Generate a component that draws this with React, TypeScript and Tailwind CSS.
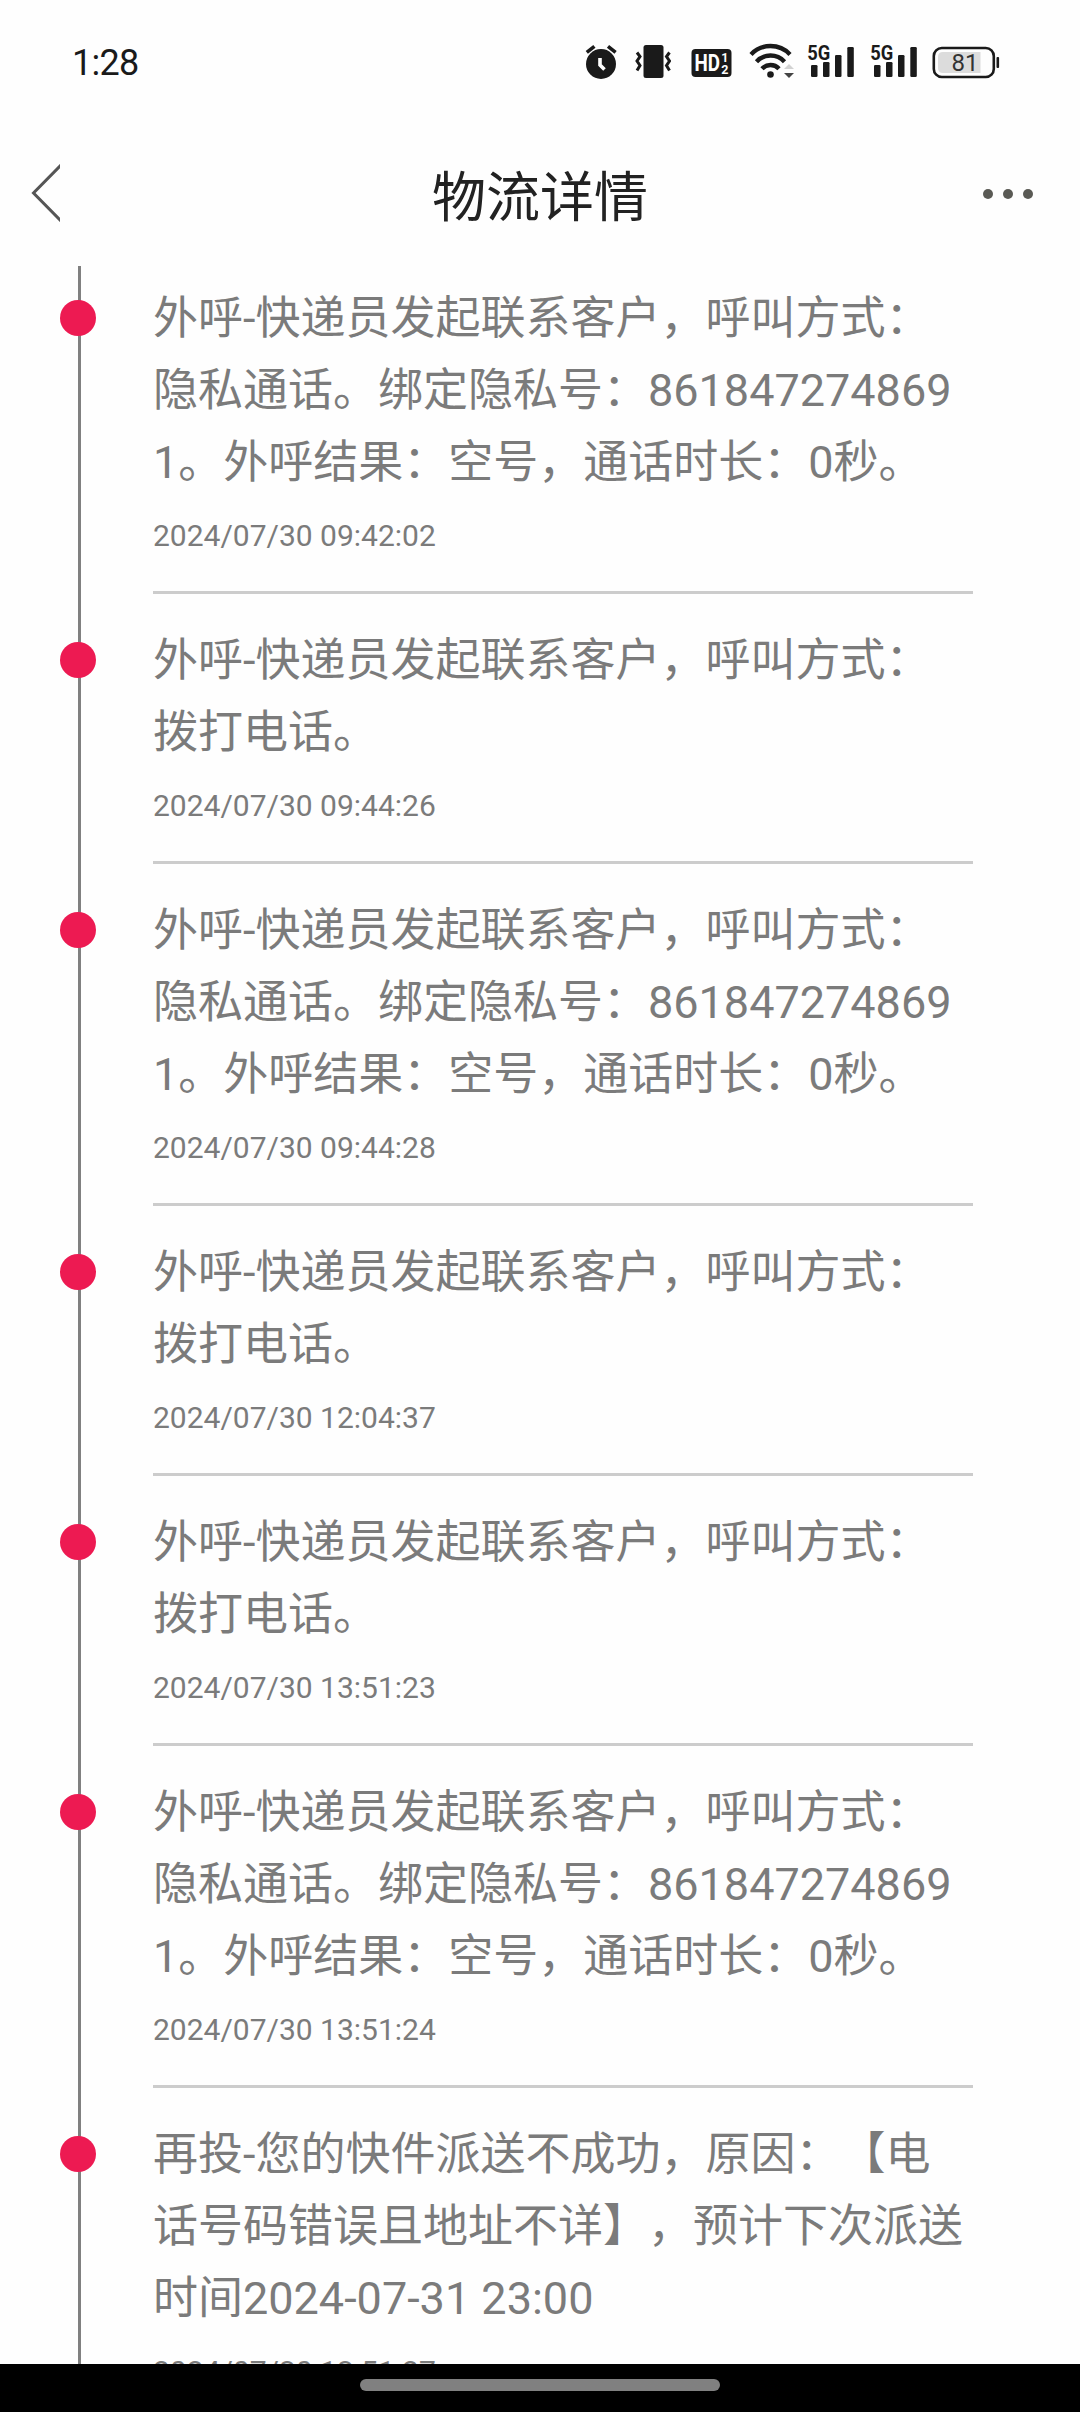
interface TrackItem {
  text: string;
  time: string;
}

const privateCall =
  "外呼-快递员发起联系客户，呼叫方式：隐私通话。绑定隐私号：8618472748691。外呼结果：空号，通话时长：0秒。";
const dialCall = "外呼-快递员发起联系客户，呼叫方式：拨打电话。";

const tracks: TrackItem[] = [
  { text: privateCall, time: "2024/07/30 09:42:02" },
  { text: dialCall, time: "2024/07/30 09:44:26" },
  { text: privateCall, time: "2024/07/30 09:44:28" },
  { text: dialCall, time: "2024/07/30 12:04:37" },
  { text: dialCall, time: "2024/07/30 13:51:23" },
  { text: privateCall, time: "2024/07/30 13:51:24" },
  {
    text: "再投-您的快件派送不成功，原因：【电话号码错误且地址不详】，预计下次派送时间2024-07-31 23:00",
    time: "2024/07/30 13:51:27",
  },
];

function AlarmIcon() {
  return (
    <svg className="w-[34px] h-[40px]" viewBox="0 0 34 40" fill="none">
      <circle cx="16" cy="22" r="15" fill="#1a1a1a" />
      <path d="M1.8 10.4L9.4 4.4M30.6 10.4L23 4.4" stroke="#1a1a1a" strokeWidth="3.6" />
      <path d="M15 16V23L19.5 27.5" stroke="#fff" strokeWidth="3.6" />
    </svg>
  );
}

function VibrateIcon() {
  return (
    <svg className="w-[36px] h-[40px]" viewBox="0 0 36 40" fill="none">
      <rect x="8.5" y="3" width="20" height="33" rx="2.5" fill="#1a1a1a" />
      <path
        d="M2 10.5L5 14.5L2 19L5 23.5L2 28.5M34.5 10.5L31.5 14.5L34.5 19L31.5 23.5L34.5 28.5"
        stroke="#1a1a1a"
        strokeWidth="3"
      />
    </svg>
  );
}

function HdIcon() {
  return (
    <svg className="w-[41px] h-[40px]" viewBox="0 0 41 40">
      <rect x="0.5" y="7" width="40" height="28" rx="4" fill="#1a1a1a" />
      <g fill="#fff" fontFamily="Roboto, sans-serif" fontWeight="700">
        <text x="3.5" y="28.8" fontSize="23" textLength="25.5" lengthAdjust="spacingAndGlyphs">
          HD
        </text>
        <text x="30.3" y="19.5" fontSize="12.5">
          1
        </text>
        <text x="30.3" y="32" fontSize="12.5">
          2
        </text>
      </g>
    </svg>
  );
}

function WifiIcon() {
  return (
    <svg className="w-[46px] h-[40px]" viewBox="0 0 46 40" fill="none">
      <g stroke="#1a1a1a" strokeWidth="4.4">
        <path d="M2 12.4A27 27 0 0 1 41 12.4" />
        <path d="M7.5 19.7A19 19 0 0 1 35.5 19.7" />
        <path d="M13 26.8A11.5 11.5 0 0 1 30 26.8" />
      </g>
      <circle cx="21.5" cy="32.5" r="3.3" fill="#1a1a1a" />
      <path d="M35 27L40 22L45 27Z" fill="#d2d2d2" />
      <path d="M35 31L40 36L45 31Z" fill="#444" />
    </svg>
  );
}

function SignalIcon() {
  return (
    <svg className="w-[48px] h-[40px]" viewBox="0 0 48 40" fill="#1a1a1a">
      <text
        x="0.3"
        y="18"
        fontSize="20.5"
        fontFamily="Roboto, sans-serif"
        fontWeight="700"
        textLength="23"
        lengthAdjust="spacingAndGlyphs"
      >
        5G
      </text>
      <rect x="4" y="23" width="6.5" height="12" rx="1.3" />
      <rect x="16" y="20" width="6.5" height="15" rx="1.3" />
      <rect x="28" y="13" width="6.5" height="22" rx="1.3" />
      <rect x="40.3" y="5" width="6.5" height="30" rx="1.3" />
    </svg>
  );
}

function BatteryIcon() {
  return (
    <svg className="w-[68px] h-[40px]" viewBox="0 0 68 40">
      <rect x="1.8" y="6" width="60" height="29" rx="8" fill="none" stroke="#1a1a1a" strokeWidth="2.6" />
      <path d="M11 10H48.5V31H11Q6 31 6 26V15Q6 10 11 10Z" fill="#dcdcdc" />
      <rect x="64.5" y="15" width="2.6" height="11" rx="1" fill="#1a1a1a" />
      <text x="19.5" y="29" fontSize="24" fill="#333" fontFamily="Roboto, sans-serif">
        81
      </text>
    </svg>
  );
}

function StatusBar() {
  return (
    <div className="flex h-[124px] shrink-0 items-start pl-[72px] pr-[80px] pt-[42px]">
      <span className="text-[36px] leading-[42px] tracking-[-0.7px] text-[#1a1a1a]">1:28</span>
      <div className="ml-auto flex items-center">
        <AlarmIcon />
        <div className="ml-[16px]">
          <VibrateIcon />
        </div>
        <div className="ml-[20px]">
          <HdIcon />
        </div>
        <div className="ml-[17px]">
          <WifiIcon />
        </div>
        <div className="ml-[12px]">
          <SignalIcon />
        </div>
        <div className="ml-[15px]">
          <SignalIcon />
        </div>
        <div className="ml-[14px]">
          <BatteryIcon />
        </div>
      </div>
    </div>
  );
}

function NavBar() {
  return (
    <header className="grid h-[142px] shrink-0 grid-cols-3 items-start pt-[36px]">
      <svg className="ml-[30px] mt-[4px] h-[58px] w-[30px]" viewBox="0 0 30 58" fill="none">
        <path d="M32 0L3.5 29L32 58" stroke="#555" strokeWidth="3" />
      </svg>
      <h1 className="mt-[3px] text-center text-[54px] leading-[72px] text-[#222]">物流详情</h1>
      <div className="mr-[47px] mt-[29px] flex gap-[10px] justify-self-end">
        <i className="size-[10px] rounded-full bg-[#5a5a55]" />
        <i className="size-[10px] rounded-full bg-[#5a5a55]" />
        <i className="size-[10px] rounded-full bg-[#5a5a55]" />
      </div>
    </header>
  );
}

function TrackRow({ item }: { item: TrackItem }) {
  return (
    <li className="flex shrink-0 pl-[60px]">
      <i className="relative mt-[18px] size-[36px] shrink-0 rounded-full bg-[#ed1a52]" />
      <div className="ml-[57px] w-[820px] border-b-3 border-[#ccc] pb-[37px] pt-px">
        <p className="break-all text-[45px] leading-[72px] [text-spacing-trim:space-all]">{item.text}</p>
        <time className="mt-[19px] block text-[30px] leading-[36px]">{item.time}</time>
      </div>
    </li>
  );
}

export default function App() {
  return (
    <div
      lang="zh-CN"
      className="flex h-[2412px] w-[1080px] flex-col overflow-hidden bg-[#fefefe] font-[Roboto,'Noto_Sans_CJK_SC',sans-serif]"
    >
      <StatusBar />
      <NavBar />
      <main className="relative min-h-0 flex-1 overflow-hidden pt-[16px] text-[#7b7b7b]">
        {/* rail behind the dots */}
        <div className="absolute inset-y-0 left-[78px] w-[3px] bg-[#808080]" />
        <ul className="flex flex-col gap-[30px]">
          {tracks.map((item) => (
            <TrackRow key={item.time} item={item} />
          ))}
        </ul>
      </main>
      <footer className="flex h-[48px] shrink-0 justify-center bg-black pt-[15px]">
        <div className="h-[12px] w-[360px] rounded-full bg-[#808080]" />
      </footer>
    </div>
  );
}
